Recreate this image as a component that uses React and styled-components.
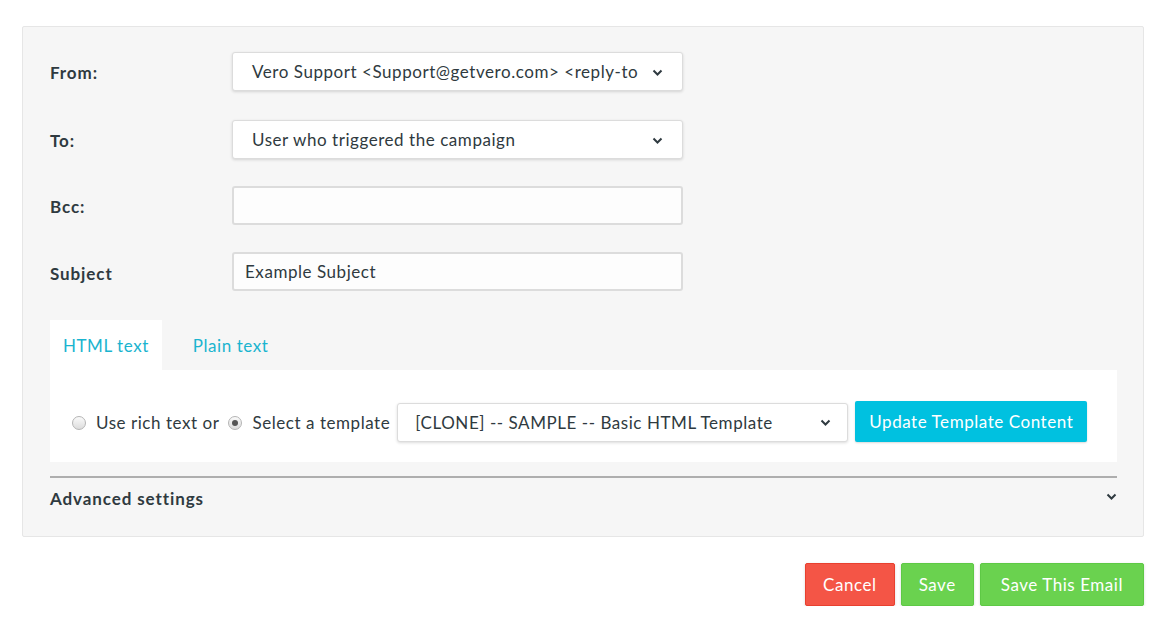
import React from "react"
import styled, { createGlobalStyle } from "styled-components"

const GlobalStyle = createGlobalStyle`
  body {
    margin: 0;
    background: #fff;
    font-family: Lato, "Open Sans", Arial, sans-serif;
    color: #2f3a40;
    letter-spacing: 0.55px;
  }
`

const Page = styled.div`
  padding: 26px 24px 0 22px;
`

const Panel = styled.div`
  background: #f6f6f6;
  border: 1px solid #e6e6e6;
  border-radius: 2px;
  padding: 25px 26px 22px 27px;
`

const FieldRow = styled.div`
  display: flex;
  align-items: center;
  height: 39px;
  margin-bottom: ${p => p.$mb || "27px"};
`

const Label = styled.label`
  width: 182px;
  font-weight: 700;
  font-size: 17px;
  letter-spacing: 0.9px;
  padding-top: ${p => (p.$low ? "4px" : "2px")};
`

const SelectBox = styled.div`
  position: relative;
  width: ${p => p.$width || "451px"};
  height: 39px;
  box-sizing: border-box;
  background: #fff;
  border: 1px solid #dcdcdc;
  border-radius: 3px;
  box-shadow: 0 1px 3px rgba(0, 0, 0, 0.14);
  display: flex;
  align-items: center;
  padding: 0 40px 0 ${p => p.$pad || "19px"};
  font-size: 17px;
  white-space: nowrap;
  overflow: hidden;
`

const Chevron = styled.svg`
  position: absolute;
  right: ${p => p.$right || "19px"};
  top: 50%;
  margin-top: -3px;
`

const TextInput = styled.div`
  width: 451px;
  height: 39px;
  box-sizing: border-box;
  background: #fdfdfd;
  border: 2px solid #dcdcdc;
  border-radius: 3px;
  display: flex;
  align-items: center;
  padding: 0 11px;
  font-size: 17px;
`

const Tabs = styled.div`
  display: flex;
  margin-top: 29px;
`

const Tab = styled.div`
  height: 50px;
  padding: 0 ${p => (p.$active ? "13px" : "31px")};
  display: flex;
  align-items: center;
  font-size: 17px;
  color: #1ab4cf;
  background: ${p => (p.$active ? "#fff" : "transparent")};
`

const TabBody = styled.div`
  background: #fff;
  height: 92px;
  box-sizing: border-box;
  display: flex;
  align-items: center;
  padding: 12px 22px 0;
  font-size: 17px;
`

const Radio = styled.span`
  width: 14px;
  height: 14px;
  box-sizing: border-box;
  border-radius: 50%;
  border: 1px solid #b5b5b5;
  background: linear-gradient(#fafafa, #dcdcdc);
  display: inline-flex;
  align-items: center;
  justify-content: center;
  margin-right: 10px;
  margin-top: 2px;
  &::after {
    content: "";
    display: ${p => (p.$checked ? "block" : "none")};
    width: 6px;
    height: 6px;
    border-radius: 50%;
    background: #555;
  }
`

const RadioText = styled.span`
  margin-right: ${p => p.$mr || "9px"};
`

const PrimaryButton = styled.button`
  margin-left: 7px;
  margin-top: -2px;
  height: 41px;
  padding: 0 14px;
  border: none;
  border-radius: 2px;
  background: #00c1e0;
  color: #fff;
  font-family: inherit;
  letter-spacing: inherit;
  font-size: 17px;
  box-shadow: 0 1px 2px rgba(0, 0, 0, 0.15);
`

const Divider = styled.div`
  border-top: 2px solid #aeaeae;
  margin-top: 14px;
`

const Advanced = styled.div`
  position: relative;
  font-weight: 700;
  font-size: 17px;
  letter-spacing: 0.9px;
  padding-top: 10px;
  height: 26px;
`

const Footer = styled.div`
  display: flex;
  justify-content: flex-end;
  gap: 6px;
  margin-top: 26px;
`

const ActionButton = styled.button`
  height: 43px;
  padding: 0 ${p => p.$pad || "17px"};
  border: 1px solid ${p => (p.$danger ? "#e8402f" : "#5ec945")};
  border-radius: 2px;
  background: ${p => (p.$danger ? "#f45546" : "#6ad24f")};
  color: #fff;
  font-family: inherit;
  letter-spacing: inherit;
  font-size: 17px;
  box-shadow: 0 1px 3px rgba(0, 0, 0, 0.15);
`

const Caret = ({ right }) => (
  <Chevron $right={right} width="11" height="8" viewBox="0 0 11 8">
    <path d="M1.5 1.5 L5.5 5.5 L9.5 1.5" fill="none" stroke="#2f3a40" strokeWidth="2" />
  </Chevron>
)

export default function App() {
  return (
    <>
      <GlobalStyle />
      <Page>
        <Panel>
          <FieldRow $mb="29px">
            <Label>From:</Label>
            <SelectBox>
              Vero Support &lt;Support@getvero.com&gt; &lt;reply-to
              <Caret />
            </SelectBox>
          </FieldRow>
          <FieldRow>
            <Label>To:</Label>
            <SelectBox>
              User who triggered the campaign
              <Caret />
            </SelectBox>
          </FieldRow>
          <FieldRow>
            <Label>Bcc:</Label>
            <TextInput />
          </FieldRow>
          <FieldRow $mb="0">
            <Label $low>Subject</Label>
            <TextInput>Example Subject</TextInput>
          </FieldRow>
          <Tabs>
            <Tab $active>HTML text</Tab>
            <Tab>Plain text</Tab>
          </Tabs>
          <TabBody>
            <Radio />
            <RadioText>Use rich text or</RadioText>
            <Radio $checked />
            <RadioText $mr="7px">Select a template</RadioText>
            <SelectBox $width="451px" $pad="17px">
              [CLONE] -- SAMPLE -- Basic HTML Template
              <Caret right="16px" />
            </SelectBox>
            <PrimaryButton>Update Template Content</PrimaryButton>
          </TabBody>
          <Divider />
          <Advanced>
            Advanced settings
            <Caret right="0px" />
          </Advanced>
        </Panel>
        <Footer>
          <ActionButton $danger>Cancel</ActionButton>
          <ActionButton>Save</ActionButton>
          <ActionButton $pad="20px">Save This Email</ActionButton>
        </Footer>
      </Page>
    </>
  )
}
